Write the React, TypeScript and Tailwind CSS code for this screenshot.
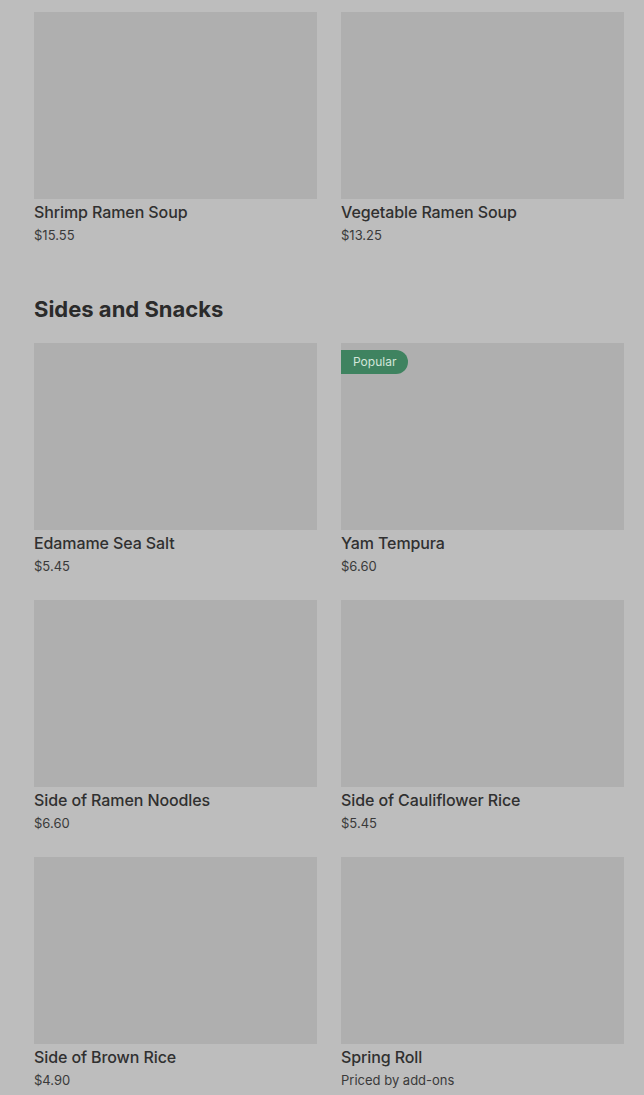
type Item = { name: string; price: string; popular?: boolean };

const ramen: Item[] = [
  { name: "Shrimp Ramen Soup", price: "$15.55" },
  { name: "Vegetable Ramen Soup", price: "$13.25" },
];

const sides: Item[] = [
  { name: "Edamame Sea Salt", price: "$5.45" },
  { name: "Yam Tempura", price: "$6.60", popular: true },
  { name: "Side of Ramen Noodles", price: "$6.60" },
  { name: "Side of Cauliflower Rice", price: "$5.45" },
  { name: "Side of Brown Rice", price: "$4.90" },
  { name: "Spring Roll", price: "Priced by add-ons" },
];

function Card({ item }: { item: Item }) {
  return (
    <div className="flex flex-col">
      <div className="relative h-[187px] bg-[#afafaf]">
        {item.popular && (
          <span className="absolute left-0 top-[7px] flex h-[24px] items-center rounded-r-full bg-[#3f8360] pl-[12px] pr-[12px] text-[12px] text-[#d3e6da]">
            Popular
          </span>
        )}
      </div>
      <p className="mt-[3px] text-[16px] font-medium leading-[20px] tracking-[-0.1px] text-[#303030]">
        {item.name}
      </p>
      <p className="mt-[4px] text-[13px] leading-[18px] text-[#3a3a3a]">
        {item.price}
      </p>
    </div>
  );
}

export default function App() {
  return (
    <main
      className="h-[1095px] overflow-hidden bg-[#bdbdbd] pl-[34px] pr-[20px] pt-[12px]"
      style={{ fontFamily: "Inter, 'Noto Sans', sans-serif" }}
    >
      <div className="grid grid-cols-2 gap-x-[24px]">
        {ramen.map((item) => (
          <Card key={item.name} item={item} />
        ))}
      </div>

      <h2 className="mt-[51px] text-[22px] font-bold leading-[28px] text-[#2b2b2b]">
        Sides and Snacks
      </h2>

      <div className="mt-[20px] grid grid-cols-2 gap-x-[24px] gap-y-[25px]">
        {sides.map((item) => (
          <Card key={item.name} item={item} />
        ))}
      </div>
    </main>
  );
}
